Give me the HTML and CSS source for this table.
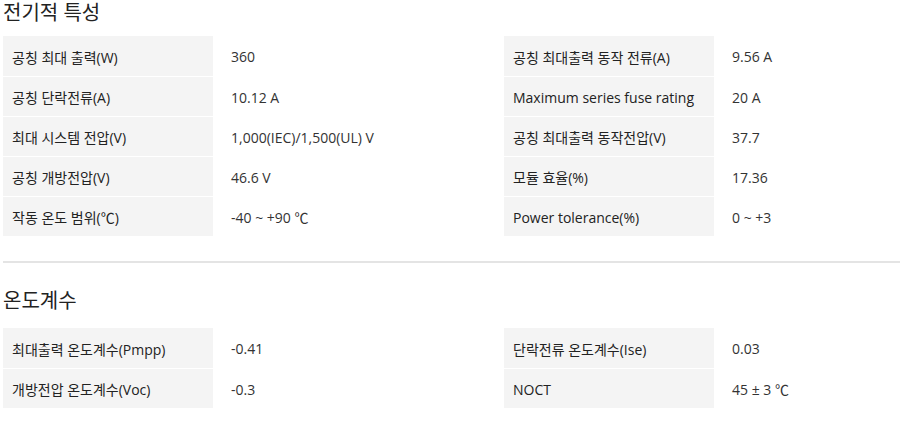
FILE: index.html
```html
<!DOCTYPE html>
<html lang="ko">
<head>
<meta charset="utf-8">
<link rel="stylesheet" href="styles.css">
</head>
<body>
<section class="spec">
  <h2 class="spec-title">전기적 특성</h2>
  <div class="spec-grid">
    <table class="spec-table">
      <tr><th>공칭 최대 출력(W)</th><td>360</td></tr>
      <tr><th>공칭 단락전류(A)</th><td>10.12 A</td></tr>
      <tr><th>최대 시스템 전압(V)</th><td>1,000(IEC)/1,500(UL) V</td></tr>
      <tr><th>공칭 개방전압(V)</th><td>46.6 V</td></tr>
      <tr><th>작동 온도 범위(℃)</th><td>-40 ~ +90 ℃</td></tr>
    </table>
    <table class="spec-table">
      <tr><th>공칭 최대출력 동작 전류(A)</th><td>9.56 A</td></tr>
      <tr><th>Maximum series fuse rating</th><td>20 A</td></tr>
      <tr><th>공칭 최대출력 동작전압(V)</th><td>37.7</td></tr>
      <tr><th>모듈 효율(%)</th><td>17.36</td></tr>
      <tr><th>Power tolerance(%)</th><td>0 ~ +3</td></tr>
    </table>
  </div>
</section>
<section class="spec spec-second">
  <h2 class="spec-title">온도계수</h2>
  <div class="spec-grid">
    <table class="spec-table">
      <tr><th>최대출력 온도계수(Pmpp)</th><td>-0.41</td></tr>
      <tr><th>개방전압 온도계수(Voc)</th><td>-0.3</td></tr>
    </table>
    <table class="spec-table">
      <tr><th>단락전류 온도계수(Ise)</th><td>0.03</td></tr>
      <tr><th>NOCT</th><td>45 ± 3 ℃</td></tr>
    </table>
  </div>
</section>
</body>
</html>
```
FILE: styles.css
```css
html, body {
  margin: 0;
  padding: 0;
  background: #fff;
}
body {
  width: 900px;
  height: 424px;
  overflow: hidden;
  font-family: "Open Sans", "Noto Sans CJK KR", sans-serif;
  color: #222;
  padding-left: 3px;
  box-sizing: border-box;
}
.spec {
  padding-bottom: 25px;
}
.spec-second {
  border-top: 2px solid #e4e4e4;
  padding-top: 23px;
  padding-bottom: 0;
}
.spec-title {
  margin: 0;
  font-size: 20px;
  font-weight: 400;
  line-height: 26px;
  height: 36px;
  color: #222;
}
.spec-second .spec-title {
  height: 42px;
  line-height: 30px;
}
.spec-grid {
  display: grid;
  grid-template-columns: 450px 1fr;
  column-gap: 51px;
}
.spec-table {
  border-collapse: collapse;
  width: 100%;
  font-size: 14px;
}
.spec-table tr {
  height: 40px;
}
.spec-table tr + tr th,
.spec-table tr + tr td {
  border-top: 1px solid #fff;
}
.spec-table th {
  width: 210px;
  background: #f4f4f4;
  text-align: left;
  font-weight: 400;
  padding: 2px 0 0 9px;
  box-sizing: border-box;
  white-space: nowrap;
}
.spec-table td {
  padding: 2px 0 0 18px;
  color: #333;
  white-space: nowrap;
}
```
